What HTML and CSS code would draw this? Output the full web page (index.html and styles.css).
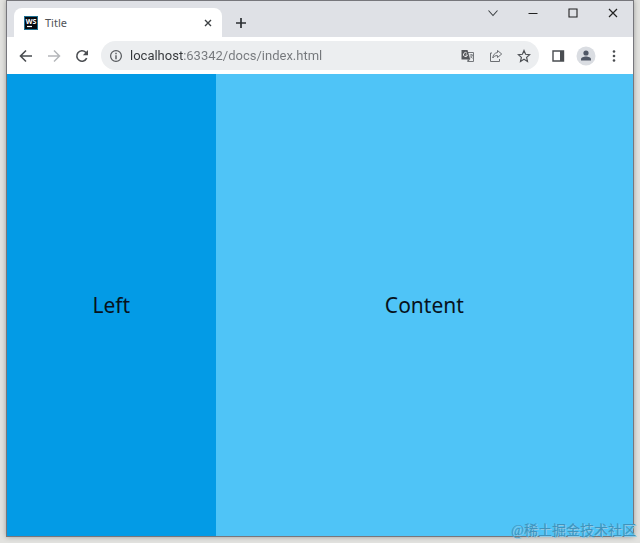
FILE: index.html
```html
<!DOCTYPE html>
<html lang="en">
<head>
<meta charset="utf-8">
<title>Title</title>
<link rel="stylesheet" href="styles.css">
</head>
<body>
<div class="window">
  <header class="tabstrip">
    <div class="tab">
      <svg class="favicon" viewBox="0 0 14 14" aria-hidden="true">
        <rect width="14" height="14" fill="#1d6f91"/>
        <rect x="1" y="1" width="12" height="12" fill="#05090f"/>
        <text class="favicon-text" x="7" y="8" text-anchor="middle">WS</text>
        <path d="M3 10.500h5" stroke="#fff" stroke-width="1.200"/>
      </svg>
      <span class="tab-title">Title</span>
      <button class="tab-close" aria-label="Close tab">
        <svg width="8" height="8" viewBox="0 0 8 8"><path d="M1 1l6 6M7 1L1 7" stroke="#3c4043" stroke-width="1.400"/></svg>
      </button>
    </div>
    <button class="new-tab" aria-label="New tab">
      <svg width="12" height="12" viewBox="0 0 12 12"><path d="M6 1v10M1 6h10" stroke="#2c2f33" stroke-width="1.700"/></svg>
    </button>
    <div class="controls">
      <button aria-label="Search tabs"><svg width="12" height="12" viewBox="0 0 12 12"><path d="M1.500 3.500L6 8.500l4.500-5" fill="none" stroke="#3c4043" stroke-width="1.100"/></svg></button>
      <button aria-label="Minimize"><svg width="12" height="12" viewBox="0 0 12 12"><path d="M1.500 6.500h9" stroke="#222" stroke-width="1"/></svg></button>
      <button aria-label="Maximize"><svg width="12" height="12" viewBox="0 0 12 12"><path d="M2 2h8v8H2z" fill="none" stroke="#222" stroke-width="1.100"/></svg></button>
      <button aria-label="Close"><svg width="12" height="12" viewBox="0 0 12 12"><path d="M2 2l8 8M10 2l-8 8" stroke="#222" stroke-width="1.200"/></svg></button>
    </div>
  </header>
  <nav class="toolbar">
    <button class="tool" aria-label="Back"><svg width="14" height="14" viewBox="0 0 14 14"><path d="M13 7H2M7 1.500L1.500 7 7 12.500" fill="none" stroke="#4a4d51" stroke-width="1.600"/></svg></button>
    <button class="tool" aria-label="Forward" disabled><svg width="14" height="14" viewBox="0 0 14 14"><path d="M1 7h11M7 1.500L12.500 7 7 12.500" fill="none" stroke="#b5b7ba" stroke-width="1.500"/></svg></button>
    <button class="tool" aria-label="Reload"><svg width="14" height="14" viewBox="0 0 14 14"><path d="M11.700 9.200A5.200 5.200 0 1 1 10.700 3.300L12 4.800" fill="none" stroke="#4a4d51" stroke-width="1.600"/><path d="M13 1v5.200H7.800z" fill="#4a4d51"/></svg></button>
    <div class="omnibox">
      <svg class="info" viewBox="0 0 14 14" aria-hidden="true"><circle cx="7" cy="7" r="5.400" fill="none" stroke="#55585c" stroke-width="1.200"/><path d="M7 6.200v4M7 3.800v1.400" stroke="#55585c" stroke-width="1.400"/></svg>
      <input class="url" type="text" aria-label="Address" value="localhost:63342/docs/index.html">
      <button class="tool" aria-label="Translate">
        <svg width="14" height="14" viewBox="0 0 14 14"><path d="M6 3.500h6.500v9H6.500" fill="none" stroke="#74777b"/><path d="M.5 1h6l2.700 9.500H.5z" fill="#55585c"/><path d="M6 4.300A2 2 0 1 0 6.400 6H4.600" fill="none" stroke="#eee"/><path d="M8.700 6h3.300M10.300 5v1M11.400 6c-.3 1.500-1 2.500-2 3.300M9.500 7.200l2.200 2.300" fill="none" stroke="#74777b" stroke-width=".9"/><path d="M6.500 12.700V10.500h2.700z" fill="#55585c"/></svg>
      </button>
      <button class="tool" aria-label="Share">
        <svg width="14" height="14" viewBox="0 0 14 14"><path d="M3 4H1.500v8.500h9V10" fill="none" stroke="#6c6f73"/><path d="M8.500 1.500L12.700 5 8.500 8.500V6.600C6.300 6.500 4.900 7.300 3.800 9c.2-3 1.800-5 4.700-5.500z" fill="none" stroke="#6c6f73" stroke-linejoin="round"/></svg>
      </button>
      <button class="tool" aria-label="Bookmark">
        <svg width="14" height="14" viewBox="0 0 14 14"><path d="M7 1.600l1.600 3.700 4 .4-3 2.700.9 4L7 10.300l-3.500 2.100.9-4-3-2.700 4-.4z" fill="none" stroke="#4f5256" stroke-width="1.200"/></svg>
      </button>
    </div>
    <button class="tool" aria-label="Side panel"><svg width="14" height="14" viewBox="0 0 14 14"><path d="M2 2h10.500v10H2z" fill="none" stroke="#4a4d51" stroke-width="1.400"/><path d="M9 2h3.500v10H9z" fill="#4a4d51"/></svg></button>
    <button class="tool" aria-label="Profile"><svg width="20" height="20" viewBox="0 0 20 20"><circle cx="10" cy="10" r="9.500" fill="#dadde2"/><circle cx="10" cy="7" r="2.600" fill="#505866"/><path d="M5 14.500v-1.300c0-1.700 2.800-2.700 5-2.700s5 1 5 2.700v1.300z" fill="#505866"/></svg></button>
    <button class="tool" aria-label="Menu"><svg width="14" height="14" viewBox="0 0 14 14"><g fill="#4a4d51"><circle cx="7" cy="2.500" r="1.300"/><circle cx="7" cy="7" r="1.300"/><circle cx="7" cy="11.500" r="1.300"/></g></svg></button>
  </nav>
  <main class="page">
    <aside class="left">Left</aside>
    <section class="content">Content</section>
  </main>
</div>
<div class="watermark" lang="zh-CN">@稀土掘金技术社区</div>
</body>
</html>
```
FILE: styles.css
```css
* {
  box-sizing: border-box;
}

body {
  position: relative;
  display: flex;
  height: 100vh;
  margin: 0;
  padding: 0 6px 6px;
  background: #e2e2df;
  font-family: "Noto Sans", "Noto Sans CJK SC", sans-serif;
}

button {
  display: flex;
  align-items: center;
  justify-content: center;
  margin: 0;
  padding: 0;
  border: 0;
  background: none;
}

.window {
  display: flex;
  flex: 1;
  flex-direction: column;
  min-width: 0;
  border: 1px solid #77777c;
  box-shadow: 0 0 5px rgba(0, 0, 0, 0.3);
}

.tabstrip {
  display: flex;
  height: 36px;
  padding-left: 7px;
  background: #dfe1e6;
}

.tab {
  display: flex;
  flex: 0 1 208px;
  align-items: center;
  gap: 7px;
  margin-top: 7px;
  padding: 0 8px 0 10px;
  border-radius: 8px 8px 0 0;
  background: #fff;
}

.favicon {
  width: 14px;
  height: 14px;
}

.favicon-text {
  fill: #fff;
  font: bold 7px "Open Sans", sans-serif;
}

.tab-title {
  flex: 1;
  color: #505357;
  font-size: 11px;
}

.tab-close {
  width: 12px;
  height: 16px;
}

.new-tab {
  width: 38px;
  margin-top: 7px;
}

.controls {
  display: flex;
  height: 24px;
  margin-left: auto;
}

.controls button {
  width: 40px;
}

.toolbar {
  display: flex;
  align-items: center;
  height: 37px;
  padding: 0 5px;
  background: #fff;
}

.tool {
  flex: none;
  width: 28px;
  height: 28px;
}

.omnibox {
  display: flex;
  flex: 1;
  align-items: center;
  min-width: 0;
  height: 29px;
  margin: 0 5px;
  padding: 0 1px 0 8px;
  border-radius: 15px;
  background: #eceef0;
}

.info {
  flex: none;
  width: 14px;
  height: 14px;
  margin-right: 7px;
}

/* The host is darker than the rest of the address. */
.url {
  flex: 1;
  min-width: 0;
  padding: 0;
  border: 0;
  outline: 0;
  background: linear-gradient(90deg, #33363a 53px, #74777b 53px);
  background-clip: text;
  color: transparent;
  font: 13px/20px Roboto, sans-serif;
}

.page {
  display: flex;
  flex: 1;
  color: #07121c;
  font-size: 21px;
}

.left,
.content {
  display: flex;
  align-items: center;
  justify-content: center;
}

.left {
  flex: 1;
  background: #039be6;
}

.content {
  flex: 2;
  background: #4fc4f7;
}

.watermark {
  position: absolute;
  right: 4px;
  bottom: 4px;
  color: #3f93bd;
  font-family: "Liberation Serif", "Noto Sans CJK SC", serif;
  font-size: 14px;
  line-height: 16px;
  text-shadow: 1px 1px 0 #8fc8e2;
}
```
